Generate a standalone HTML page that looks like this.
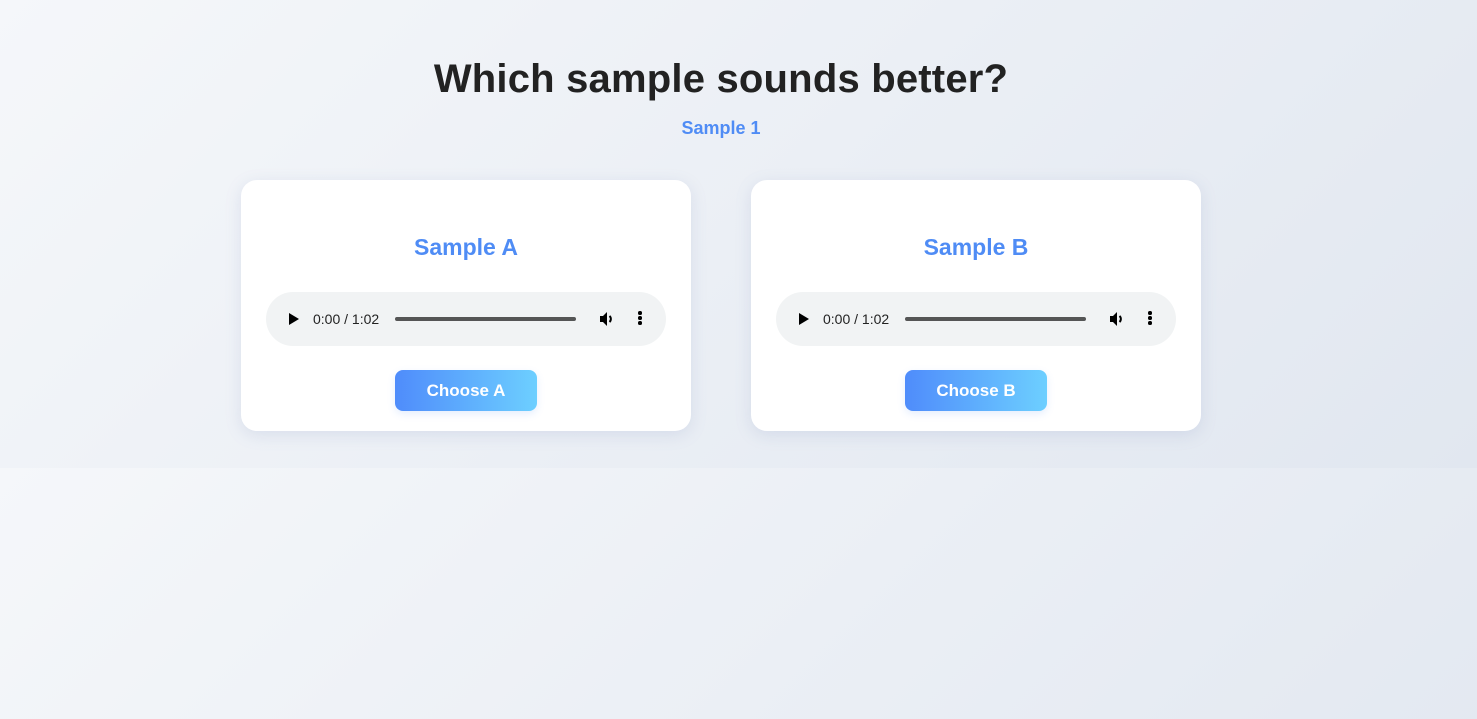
<!DOCTYPE html>
<html><head><meta charset="utf-8"><style>
html,body{margin:0;height:100%}
body{width:1477px;height:719px;overflow:hidden;font-family:"Liberation Sans",sans-serif;
background:linear-gradient(135deg,#f5f7fa 0%,#e1e7f0 100%);background-size:1477px 468px;background-repeat:repeat-y}
h1{margin:0;position:absolute;top:57px;left:0;width:1442px;text-align:center;font-size:40px;font-weight:bold;color:#222;letter-spacing:0.2px}
.sub{position:absolute;top:118px;left:0;width:1442px;text-align:center;font-size:18px;font-weight:bold;color:#4f8cf5}
.card{position:absolute;top:180px;width:450px;height:251px;background:#fff;border-radius:16px;box-shadow:0 4px 16px rgba(120,140,190,.18)}
.t{position:absolute;top:54px;left:0;width:450px;text-align:center;font-size:23px;font-weight:bold;color:#4f8cf5}
.aud{position:absolute;left:25px;top:112px;width:400px;height:54px;border-radius:27px;background:#f1f3f4;font-size:14px;color:#222}
.play{position:absolute;left:23px;top:21px;width:0;height:0;border-left:10px solid #000;border-top:6px solid transparent;border-bottom:6px solid transparent}
.time{position:absolute;left:47px;top:19px}
.bar{position:absolute;left:129px;top:25px;width:181px;height:4px;border-radius:2px;background:#555}
.vol{position:absolute;left:333px;top:19px}
.dots{position:absolute;left:372px;top:19px;width:4px}
.dots i{display:block;width:3.5px;height:3.5px;border-radius:50%;background:#000;margin-bottom:1.5px}
.btn{position:absolute;left:154px;top:190px;width:142px;height:41px;border-radius:8px;background:linear-gradient(90deg,#4f8cfb,#6dcfff);color:#fff;font-weight:bold;font-size:17px;text-align:center;line-height:41px;box-shadow:0 3px 8px rgba(80,140,250,.15)}
</style></head><body>
<h1>Which sample sounds better?</h1>
<div class="sub">Sample 1</div>
<div class="card" style="left:241px">
<div class="t">Sample A</div>
<div class="aud"><div class="play"></div><div class="time">0:00 / 1:02</div><div class="bar"></div>
<svg class="vol" width="16" height="16" viewBox="0 0 16 16"><path d="M1 5h3l4-4v14l-4-4H1z" fill="#000"/><path d="M10.5 5a4 4 0 0 1 0 6" stroke="#000" stroke-width="2" fill="none"/></svg>
<div class="dots"><i></i><i></i><i></i></div></div>
<div class="btn">Choose A</div>
</div>
<div class="card" style="left:751px">
<div class="t">Sample B</div>
<div class="aud"><div class="play"></div><div class="time">0:00 / 1:02</div><div class="bar"></div>
<svg class="vol" width="16" height="16" viewBox="0 0 16 16"><path d="M1 5h3l4-4v14l-4-4H1z" fill="#000"/><path d="M10.5 5a4 4 0 0 1 0 6" stroke="#000" stroke-width="2" fill="none"/></svg>
<div class="dots"><i></i><i></i><i></i></div></div>
<div class="btn">Choose B</div>
</div>
</body></html>
